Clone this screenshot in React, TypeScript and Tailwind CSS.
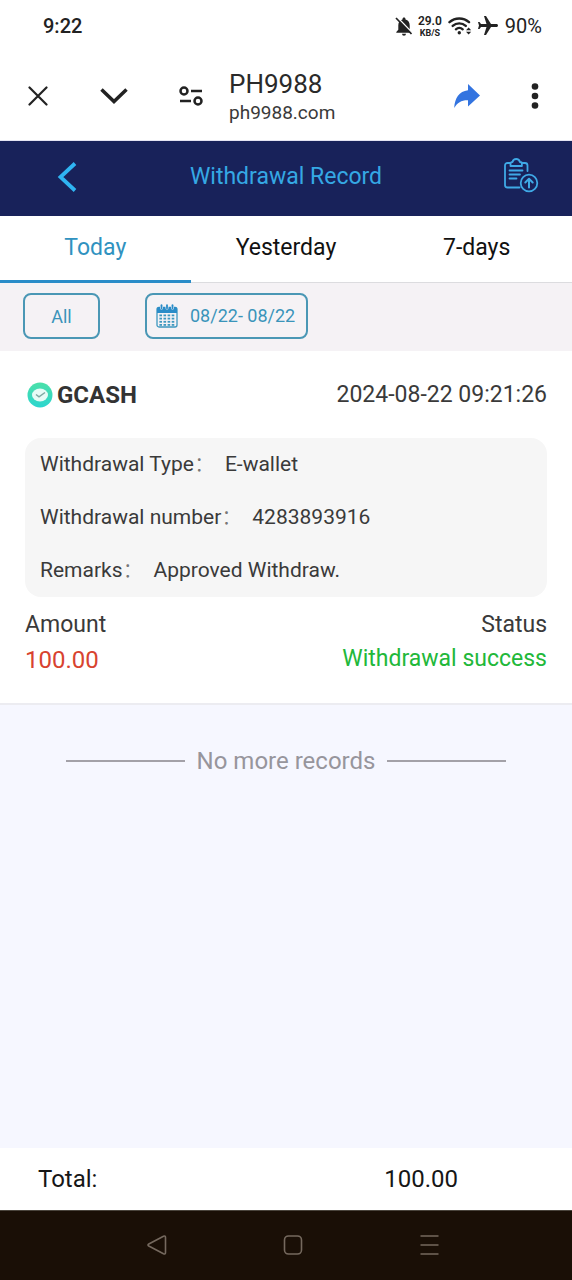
import React, { useState } from 'react';

const tabs = ['Today', 'Yesterday', '7-days'];

const details = [
  { label: 'Withdrawal Type', value: 'E-wallet' },
  { label: 'Withdrawal number', value: '4283893916' },
  { label: 'Remarks', value: 'Approved Withdraw.' },
];

const CalendarIcon: React.FC = () => (
  <svg width="22" height="24" viewBox="0 0 22 24" fill="none">
    <rect x="1" y="3.5" width="20" height="19.5" rx="2" stroke="#3d97bf" strokeWidth="1.3" />
    <path d="M1 5a2 2 0 0 1 2-2h16a2 2 0 0 1 2 2v4H1z" fill="#2a8cc8" />
    {[5.5, 11, 16.5].map((x) => (
      <path key={x} d={`M${x} 1v3`} stroke="#f5f2f5" strokeWidth="3" strokeLinecap="round" />
    ))}
    {[5.5, 11, 16.5].map((x) => (
      <path key={x} d={`M${x} 1.2v3`} stroke="#2a8cc8" strokeWidth="1.8" strokeLinecap="round" />
    ))}
    {[10.5, 13.7, 16.9, 20].map((y) =>
      [3.4, 7.5, 11.6, 15.7].map((x) => (
        <rect key={`${x}-${y}`} x={x} y={y} width="2.6" height="1.8" fill="#3d97bf" />
      ))
    )}
  </svg>
);

const ClipboardIcon: React.FC = () => (
  <svg width="36" height="36" viewBox="0 0 36 36" fill="none" stroke="#3fa9e6" strokeWidth="1.8" strokeLinecap="round" strokeLinejoin="round">
    <path d="M7 5H4.500a2.500 2.500 0 0 0-2.500 2.500V27a2.500 2.500 0 0 0 2.500 2.500h12" />
    <path d="M19.500 5H22a2.500 2.500 0 0 1 2.500 2.500V13" />
    <path d="M7.500 8V5.500Q7.500 4 9.500 4q.7-3 3.700-3t3.700 3q2 0 2 1.500V8z" />
    <path d="M6.500 12.500h13M6.500 16.500h10.500M6.500 20.500h7" />
    <circle cx="26" cy="25" r="8.3" />
    <path d="M26 29.500v-8.500M22.300 24.500l3.700-3.700 3.700 3.700" strokeWidth="2" />
  </svg>
);

const StatusBar: React.FC = () => (
  <div className="flex h-[52px] items-center justify-between pr-[30px] pl-[43px] text-[20px] text-[#222]">
    <span className="font-medium">9:22</span>
    <div className="flex items-center">
      {/* Muted bell */}
      <svg width="18" height="20" viewBox="0 0 18 20">
        <path d="M9 1.500c.9 0 1.500.6 1.500 1.500v.6c2.700.7 4.200 3 4.200 5.600v4.500l2 2.300v.8H1.300V16l2-2.300V9.200c0-2.600 1.500-4.900 4.200-5.600V3c0-.9.600-1.500 1.500-1.500zM7 17.700h4a2 2 0 0 1-4 0z" fill="#222" />
        <path d="M2.500 1.500 17.500 17" stroke="#fff" strokeWidth="1.5" />
        <path d="M1 2 16.500 18" stroke="#222" strokeWidth="1.7" />
      </svg>
      <div className="ml-[5px] flex flex-col items-center text-[#222]">
        <span className="text-[12px] leading-[14px] font-semibold">29.0</span>
        <span className="text-[9px] leading-[11px] font-bold">KB/S</span>
      </div>
      <svg className="ml-[6px]" width="24" height="20" viewBox="0 0 24 20" fill="none" stroke="#222" strokeWidth="2.4" strokeLinecap="round">
        <path d="M1.500 6.200a14.500 14.500 0 0 1 19.500 0" />
        <path d="M4.700 9.900a9.700 9.700 0 0 1 13.100 0" />
        <path d="M7.900 13.300a5.200 5.200 0 0 1 6.800 0" />
        <circle cx="11.3" cy="16.7" r="1.7" fill="#222" stroke="none" />
        <path d="M18 14.200l2.600-2.800 2.600 2.800zM18 15.800l2.600 2.800 2.600-2.800z" fill="#222" stroke="none" />
      </svg>
      {/* Airplane mode */}
      <svg className="ml-[5px]" width="22" height="20" viewBox="2 2 20 20">
        <path transform="rotate(90 12 12)" d="M21 16v-2l-8-5V3.500c0-.83-.67-1.500-1.500-1.500S10 2.670 10 3.500V9l-8 5v2l8-2.500V19l-2 1.500V22l3.500-1 3.500 1v-1.500L13 19v-5.500l8 2.500z" fill="#222" />
      </svg>
      <span className="ml-[6px]">90%</span>
    </div>
  </div>
);

const BrowserBar: React.FC = () => (
  <div className="flex h-[89px] items-center border-b border-[#e4e4f2] pr-[3px]">
    <button aria-label="Close" className="flex w-[76px] justify-center">
      <svg width="20" height="20" viewBox="0 0 20 20" stroke="#222" strokeWidth="2.2" strokeLinecap="round">
        <path d="M1.500 1.500l17 17M18.500 1.500l-17 17" />
      </svg>
    </button>
    <button aria-label="Minimize" className="flex w-[76px] justify-center">
      <svg width="28" height="18" viewBox="0 0 28 18" fill="none" stroke="#222" strokeWidth="3.5">
        <path d="M1.500 2.500 14 14.500l12.500-12" />
      </svg>
    </button>
    <button aria-label="Site settings" className="flex w-[77px] justify-center">
      <svg width="24" height="22" viewBox="0 0 24 22" fill="none" stroke="#222" strokeWidth="2.5">
        <circle cx="5" cy="6" r="3.5" />
        <path d="M12 6h11M1 16h11" />
        <circle cx="19" cy="16" r="3.5" />
      </svg>
    </button>
    <div className="flex min-w-0 flex-1 flex-col pt-1">
      <span className="text-[26px] leading-[30px] text-[#2a2a2a]">PH9988</span>
      <span className="text-[19px] leading-[28px] text-[#3a3a3a]">ph9988.com</span>
    </div>
    <button aria-label="Share" className="flex w-[68px] justify-center">
      <svg width="28" height="26" viewBox="0 0 28 26">
        <path d="M15 1l12 11.500L15 23.500v-6.300C8.500 17 4.500 19.500 1.200 25 1.800 15 6 8.500 15 7.300z" fill="#3374e0" />
      </svg>
    </button>
    <button aria-label="More" className="flex w-[68px] justify-center">
      <svg width="8" height="28" viewBox="0 0 8 28" fill="#222">
        <circle cx="4" cy="4.5" r="3.3" />
        <circle cx="4" cy="14" r="3.3" />
        <circle cx="4" cy="23.5" r="3.3" />
      </svg>
    </button>
  </div>
);

const SystemNav: React.FC = () => (
  <nav className="flex h-[70px] items-center justify-center gap-[112px] border-t border-[#4a443c] bg-[#1a0f06] pb-[2px] pl-[14px]">
    <button aria-label="Back">
      <svg width="24" height="24" viewBox="0 0 24 24" fill="none" stroke="#75695e" strokeWidth="1.6" strokeLinejoin="round">
        <path d="M18.500 3.200Q20.500 2.400 20.500 4.500v15q0 2.100-2 1.300L3.800 13q-1.600-1 0-2z" />
      </svg>
    </button>
    <button aria-label="Home">
      <svg width="24" height="24" viewBox="0 0 24 24" fill="none" stroke="#75695e" strokeWidth="1.6">
        <rect x="3.5" y="3" width="17" height="18" rx="4" />
      </svg>
    </button>
    <button aria-label="Recent apps">
      <svg width="24" height="24" viewBox="0 0 24 24" stroke="#75695e" strokeWidth="1.6">
        <path d="M3.500 3h18M3.500 12h18M3.500 21h18" />
      </svg>
    </button>
  </nav>
);

export default function App() {
  const [active, setActive] = useState('Today');

  return (
    <div className="flex min-h-screen flex-col bg-white font-['Roboto','Noto_Sans_CJK_SC',sans-serif]">
      <StatusBar />
      <BrowserBar />

      {/* Page header */}
      <header className="flex h-[75px] items-center justify-between bg-[#18225a] pr-[33px] pb-[3px] pl-[57px]">
        <button aria-label="Go back" className="flex w-[60px]">
          <svg width="20" height="32" viewBox="0 0 20 32" fill="none" stroke="#2fb4f2" strokeWidth="3.8">
            <path d="M18 2.500 3.500 16 18 29.500" />
          </svg>
        </button>
        <h1 className="text-[23px] text-[#35a8e4]">Withdrawal Record</h1>
        <button aria-label="Submit record" className="flex w-[84px] justify-end pb-[2px]">
          <ClipboardIcon />
        </button>
      </header>

      {/* Period tabs */}
      <div role="tablist" className="grid h-[67px] grid-cols-3">
        {tabs.map((tab) => (
          <button
            key={tab}
            role="tab"
            aria-selected={active === tab}
            onClick={() => setActive(tab)}
            className={`text-[23px] ${
              active === tab ? 'border-b-3 border-[#2a8cc8] text-[#3092c0]' : 'border-b border-[#dcdcdf] pb-[2px] text-[#111]'
            }`}
          >
            {tab}
          </button>
        ))}
      </div>

      {/* Filters */}
      <div className="flex h-[68px] items-center gap-[45px] bg-[#f5f2f5] px-[23px] pb-[2px]">
        <button className="h-[46px] w-[77px] rounded-lg border-2 border-[#4a97b5] text-[18px] text-[#3a94ba]">
          All
        </button>
        <button className="flex h-[46px] items-center gap-3 rounded-lg border-2 border-[#4a97b5] pr-[11px] pl-[9px] text-[18px] text-[#3a94ba]">
          <CalendarIcon />
          <span className="pb-[2px]">08/22- 08/22</span>
        </button>
      </div>

      {/* Record */}
      <article className="border-b-2 border-[#ececf1] px-[25px] pt-[29px] pb-[28px] text-[23px] text-[#3a3a3a]">
        <div className="flex items-center justify-between leading-[30px]">
          <div className="flex items-center gap-1">
            <svg width="28" height="28" viewBox="0 0 28 28">
              <defs>
                <linearGradient id="wallet" x1="0" y1="0" x2="0" y2="1">
                  <stop offset="0" stopColor="#4be0a8" />
                  <stop offset="1" stopColor="#2bd5cf" />
                </linearGradient>
              </defs>
              <circle cx="15" cy="14" r="12.5" fill="url(#wallet)" />
              <ellipse cx="15" cy="14" rx="8" ry="6.5" fill="#e6fbf6" />
              <path d="M11 13.500l3 2.300 6-4.300" fill="none" stroke="#7fa8a3" strokeWidth="1.5" />
            </svg>
            <span className="text-[24px] font-bold text-[#333]">GCASH</span>
          </div>
          <time>2024-08-22 09:21:26</time>
        </div>

        <dl className="mt-[28px] flex flex-col gap-[23px] rounded-2xl bg-[#f6f6f6] px-[15px] pt-[11px] pb-[12px] text-[21px] leading-[30px]">
          {details.map(({ label, value }) => (
            <div key={label} className="flex gap-[10px]">
              <dt>
                {label}
                <span className="font-light text-[#777]">：</span>
              </dt>
              <dd>{value}</dd>
            </div>
          ))}
        </dl>

        <div className="mt-[13px] flex justify-between leading-[30px]">
          <div className="flex flex-col gap-[5px]">
            <span>Amount</span>
            <span className="text-[24px] text-[#d8432f]">100.00</span>
          </div>
          <div className="flex flex-col gap-[4px] text-right">
            <span>Status</span>
            <span className="text-[#22b83a]">Withdrawal success</span>
          </div>
        </div>
      </article>

      <main className="flex-1 bg-[#f6f7ff] pt-[39px]">
        <div className="flex items-center justify-center gap-3 px-[66px] text-[24px] leading-[34px] text-[#97959c]">
          <span className="h-[2px] flex-1 bg-[#a3a1a8]" />
          <p>No more records</p>
          <span className="h-[2px] flex-1 bg-[#a3a1a8]" />
        </div>
      </main>

      {/* Total */}
      <footer className="flex h-[62px] items-center justify-between pr-[114px] pl-[38px] text-[24px] text-[#161616]">
        <span>Total:</span>
        <span>100.00</span>
      </footer>

      <SystemNav />
    </div>
  );
}
